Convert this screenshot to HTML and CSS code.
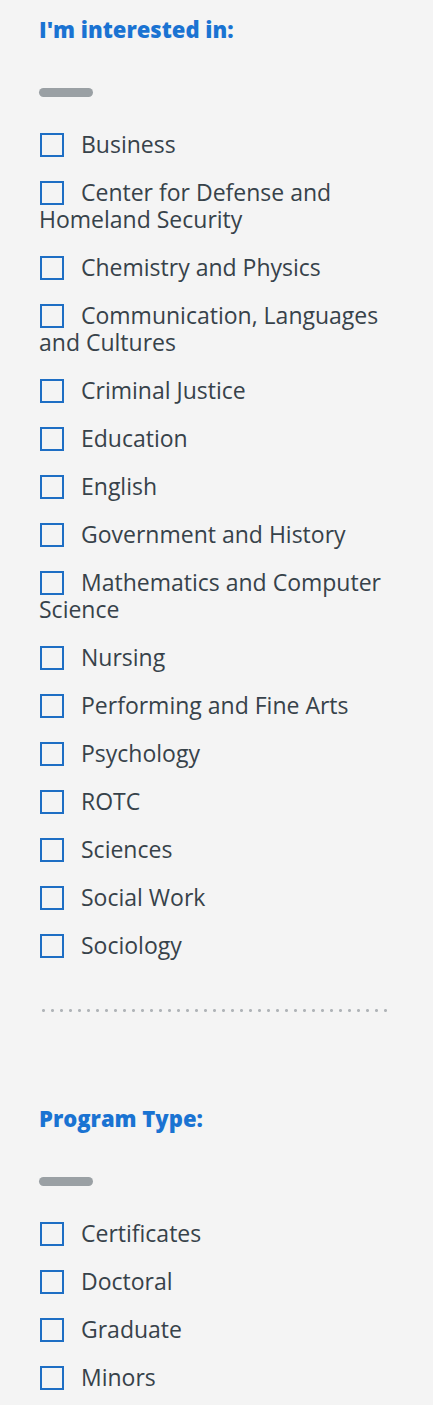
FILE: index.html
```html
<!DOCTYPE html>
<html lang="en">
<head>
  <meta charset="UTF-8">
  <meta name="viewport" content="width=device-width, initial-scale=1.0">
  <title>Filters</title>
  <link rel="stylesheet" href="styles.css">
</head>
<body>

<div class="filters">
  <!-- area of interest -->
  <fieldset class="filter-group">
    <h2 class="filter-title">I'm interested in:</h2>
    <span class="filter-bar"></span>
    <ul class="filter-list">
      <li><label><input type="checkbox">Business</label></li>
      <li><label><input type="checkbox">Center for Defense and Homeland Security</label></li>
      <li><label><input type="checkbox">Chemistry and Physics</label></li>
      <li><label><input type="checkbox">Communication, Languages and Cultures</label></li>
      <li><label><input type="checkbox">Criminal Justice</label></li>
      <li><label><input type="checkbox">Education</label></li>
      <li><label><input type="checkbox">English</label></li>
      <li><label><input type="checkbox">Government and History</label></li>
      <li><label><input type="checkbox">Mathematics and Computer Science</label></li>
      <li><label><input type="checkbox">Nursing</label></li>
      <li><label><input type="checkbox">Performing and Fine Arts</label></li>
      <li><label><input type="checkbox">Psychology</label></li>
      <li><label><input type="checkbox">ROTC</label></li>
      <li><label><input type="checkbox">Sciences</label></li>
      <li><label><input type="checkbox">Social Work</label></li>
      <li><label><input type="checkbox">Sociology</label></li>
    </ul>
    <div class="filter-divider"></div>
  </fieldset>

  <!-- program type -->
  <fieldset class="filter-group">
    <h2 class="filter-title">Program Type:</h2>
    <span class="filter-bar"></span>
    <ul class="filter-list">
      <li><label><input type="checkbox">Certificates</label></li>
      <li><label><input type="checkbox">Doctoral</label></li>
      <li><label><input type="checkbox">Graduate</label></li>
      <li><label><input type="checkbox">Minors</label></li>
    </ul>
  </fieldset>
</div>

</body>
</html>
```

FILE: styles.css
```css
body {
  margin: 0;
  background-color: #f4f4f4;
  font-family: "Open Sans", "Liberation Sans", sans-serif;
  color: #37424a;
}
.filters {
  padding: 14px 39px 0 39px;
}
.filter-group {
  border: 0;
  margin: 0;
  padding: 0;
}
.filter-title {
  margin: 0;
  font-size: 22px;
  line-height: 30px;
  font-weight: 800;
  color: #1a73d2;
}
.filter-bar {
  display: block;
  width: 54px;
  height: 9px;
  margin-top: 44px;
  border-radius: 5px;
  background-color: #9aa0a4;
}
.filter-list {
  list-style: none;
  margin: 34px 0 0 0;
  padding: 0;
}
.filter-list li {
  font-size: 23px;
  line-height: 27px;
  margin-bottom: 21px;
}
.filter-list input {
  appearance: none;
  -webkit-appearance: none;
  box-sizing: border-box;
  width: 24px;
  height: 24px;
  margin: 0 17px 0 1px;
  border: 2px solid #1e6ec4;
  background: transparent;
  vertical-align: -4px;
}
.filter-divider {
  height: 3px;
  margin: 50px 0 0 0;
  width: 354px;
  background-image: radial-gradient(circle, #b0b4b8 1.3px, transparent 1.6px);
  background-size: 9px 3px;
}
.filter-group + .filter-group {
  margin-top: 91px;
}
```
